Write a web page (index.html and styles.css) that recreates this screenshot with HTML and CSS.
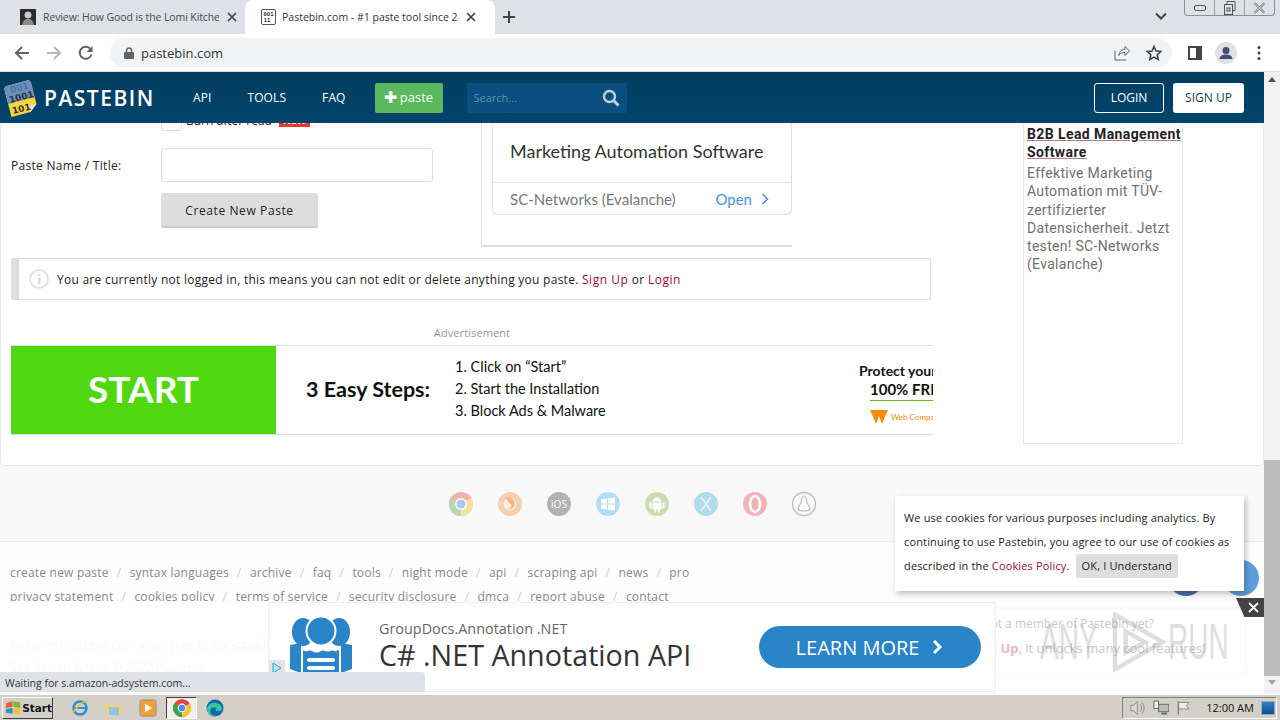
FILE: index.html
```html
<!DOCTYPE html>
<html lang="en">
<head>
    <meta charset="UTF-8">
    <title>Pastebin.com - #1 paste tool since 2002!</title>
    <link rel="stylesheet" href="styles.css">
</head>
<body>

    <!-- Browser tabs -->
    <div class="tabstrip">
        <div class="tab">
            <svg class="favicon" width="16" height="16" viewBox="0 0 16 16"><rect width="16" height="16" fill="#2b2b2b"/><circle cx="8" cy="6" r="3.5" fill="#c9c9c9"/><path d="M2 16c1-5 3-6 6-6s5 1 6 6z" fill="#8a8a8a"/></svg>
            <span class="tab-title">Review: How Good is the Lomi Kitche</span>
            <svg class="tab-close" width="10" height="10" viewBox="0 0 10 10"><path d="M1 1l8 8M9 1l-8 8" stroke="#3c4043" stroke-width="1.700"/></svg>
        </div>
        <div class="tab active">
            <svg class="favicon" width="15" height="16" viewBox="0 0 15 16"><rect x=".5" y=".5" width="14" height="15" rx="1.500" fill="#fff" stroke="#555"/><text x="7.500" y="7" class="favicon-text">001</text><text x="6" y="13" class="favicon-text">11</text></svg>
            <span class="tab-title">Pastebin.com - #1 paste tool since 2</span>
            <svg class="tab-close" width="10" height="10" viewBox="0 0 10 10"><path d="M1 1l8 8M9 1l-8 8" stroke="#3c4043" stroke-width="1.700"/></svg>
        </div>
        <svg class="new-tab" width="14" height="14" viewBox="0 0 14 14"><path d="M7 1v12M1 7h12" stroke="#444" stroke-width="2"/></svg>
        <svg class="tab-list" width="12" height="8" viewBox="0 0 12 8"><path d="M1 1.500l5 5 5-5" fill="none" stroke="#444" stroke-width="2"/></svg>
        <div class="window-controls">
            <span class="win-btn"><svg width="12" height="6" viewBox="0 0 12 6"><rect x=".5" y=".5" width="11" height="5" rx="1.500" fill="none" stroke="#555"/></svg></span>
            <span class="win-btn"><svg width="14" height="14" viewBox="0 0 14 14"><path d="M4 3V.5h8v9H10" fill="none" stroke="#555"/><rect x="1.500" y="3.500" width="8" height="10" fill="none" stroke="#555"/><rect x="4" y="7" width="3" height="3" fill="none" stroke="#555"/></svg></span>
            <span class="win-btn"><svg width="13" height="12" viewBox="0 0 13 12"><path d="M1.500 1l10 10M11.500 1l-10 10" stroke="#777" stroke-width="2.400"/><path d="M1.500 1l10 10M11.500 1l-10 10" stroke="#fff" stroke-width=".8"/></svg></span>
        </div>
    </div>

    <!-- Address bar -->
    <div class="toolbar">
        <svg class="tool-icon" width="16" height="16" viewBox="0 0 16 16"><path d="M15 8H2M8 2L2 8l6 6" fill="none" stroke="#5f6368" stroke-width="2"/></svg>
        <svg class="tool-icon" width="16" height="16" viewBox="0 0 16 16"><path d="M1 8h13M8 2l6 6-6 6" fill="none" stroke="#b4b7bb" stroke-width="2"/></svg>
        <svg class="tool-icon" width="16" height="16" viewBox="0 0 16 16"><path d="M13.500 9.500A6 6 0 1 1 12 3.600" fill="none" stroke="#5f6368" stroke-width="2"/><path d="M14.500 1v6h-6z" fill="#5f6368"/></svg>
        <div class="omnibox">
            <svg width="10" height="12" viewBox="0 0 10 12"><rect y="5" width="10" height="7" rx="1" fill="#5f6368"/><path d="M2.500 5.500V3.500a2.500 2.500 0 0 1 5 0v2" fill="none" stroke="#5f6368" stroke-width="1.500"/></svg>
            <span class="url">pastebin.com</span>
            <svg class="omni-share" width="16" height="16" viewBox="0 0 16 16"><path d="M11 1.500v2.800C6.500 4.500 5 7.500 4.800 10.500c1.500-2.500 3.500-3 6.200-3v3L15.500 6z M1 5.500v9.500h11" fill="none" stroke="#5f6368"/></svg>
            <svg class="omni-star" width="16" height="16" viewBox="0 0 16 16"><path d="M8 1.500l2 4.500 4.800.5-3.600 3.200 1 4.800L8 12.100 3.800 14.500l1-4.800L1.200 6.500 6 6z" fill="none" stroke="#444" stroke-width="1.600"/></svg>
        </div>
        <svg class="side-icon" width="14" height="14" viewBox="0 0 14 14"><rect x="1" y="1" width="12" height="12" fill="none" stroke="#444" stroke-width="2"/><rect x="8" y="1" width="5" height="12" fill="#444"/></svg>
        <svg class="avatar" width="22" height="22" viewBox="0 0 22 22"><circle cx="11" cy="11" r="11" fill="#dfe1e5"/><circle cx="11" cy="8.500" r="3.500" fill="#45506e"/><path d="M4.500 17c.5-3.500 3-4.500 6.500-4.500s6 1 6.500 4.500z" fill="#45506e"/></svg>
        <svg class="menu-icon" width="4" height="16" viewBox="0 0 4 16"><circle cx="2" cy="2.500" r="1.500" fill="#444"/><circle cx="2" cy="8" r="1.500" fill="#444"/><circle cx="2" cy="13.500" r="1.500" fill="#444"/></svg>
    </div>

    <!-- Viewport -->
    <div class="viewport">
        <div class="page">

            <div class="site-header">
                <svg class="logo" width="38" height="42" viewBox="0 0 38 42">
                    <path d="M2.500 13c-.5-2 .5-3.500 2.500-4L25 3.500c2-.5 3.500.5 4 2.500l5.500 21-6 8-19 5z" fill="#f3d63c"/>
                    <path d="M2.500 13c-.5-2 .5-3.500 2.500-4L25 3.500c2-.5 3.500.5 4 2.500l3.500 14L6.500 27z" fill="#6a8fc0"/>
                    <path d="M34.500 27l-6 8c-1-3-1-5-1-6.500z" fill="#dfe3e6"/>
                    <text x="9" y="16" class="logo-text logo-text-top" transform="rotate(-14 9 16)">001</text>
                    <text x="8" y="26" class="logo-text" transform="rotate(-14 8 26)">1001</text>
                    <text x="11" y="37" class="logo-text" transform="rotate(-14 11 37)">101</text>
                </svg>
                <span class="brand">PASTEBIN</span>
                <nav class="site-nav">
                    <a>API</a>
                    <a>TOOLS</a>
                    <a>FAQ</a>
                </nav>
                <div class="paste-btn"><span class="paste-plus">&#10010;</span> paste</div>
                <div class="search-box">
                    <span>Search...</span>
                    <svg width="18" height="18" viewBox="0 0 18 18"><circle cx="7.500" cy="7.500" r="5.500" fill="none" stroke="#b9d3e4" stroke-width="2.400"/><path d="M11.500 11.500L16.500 16.500" stroke="#b9d3e4" stroke-width="3"/></svg>
                </div>
                <div class="header-right">
                    <a class="login-btn">LOGIN</a>
                    <a class="signup-btn">SIGN UP</a>
                </div>
            </div>

            <div class="scroll-area">
                <div class="card">
                    <div class="main-col">
                        <div class="top-row">
                            <div class="form-col">
                                <div class="check-row">
                                    <span class="checkbox"></span>
                                    <span class="check-label">Burn after read</span>
                                    <span class="new-badge">NEW</span>
                                </div>
                                <div class="name-row">
                                    <label class="name-label">Paste Name / Title:</label>
                                    <input class="name-input" type="text">
                                </div>
                                <button class="create-btn">Create New Paste</button>
                            </div>
                            <div class="text-ad">
                                <div class="text-ad-inner">
                                    <div class="text-ad-title">Marketing Automation Software</div>
                                    <div class="text-ad-foot">
                                        <span>SC-Networks (Evalanche)</span>
                                        <span class="text-ad-open">Open
                                            <svg width="8" height="12" viewBox="0 0 8 12"><path d="M1.500 1l5 5-5 5" fill="none" stroke="#4a90d9" stroke-width="1.500"/></svg>
                                        </span>
                                    </div>
                                </div>
                            </div>
                        </div>

                        <div class="notice">
                            <svg width="20" height="20" viewBox="0 0 20 20"><circle cx="10" cy="10" r="9" fill="none" stroke="#ddd" stroke-width="1.600"/><rect x="9" y="8.500" width="2.400" height="6.500" fill="#ddd"/><rect x="9" y="4.800" width="2.400" height="2.400" fill="#ddd"/></svg>
                            <span>You are currently not logged in, this means you can not edit or delete anything you paste. <a class="red-link">Sign Up</a> or <a class="red-link">Login</a></span>
                        </div>

                        <div class="ad-label">Advertisement</div>
                        <div class="banner">
                            <div class="banner-start"><span>START</span></div>
                            <div class="banner-head">3 Easy Steps:</div>
                            <div class="banner-steps">
                                <div>1. Click on &ldquo;Start&rdquo;</div>
                                <div>2. Start the Installation</div>
                                <div>3. Block Ads &amp; Malware</div>
                            </div>
                            <div class="banner-protect">
                                <div class="banner-you">Protect your</div>
                                <div class="banner-free">100% FREE</div>
                                <div class="banner-web">
                                    <svg width="18" height="14" viewBox="0 0 18 14"><path d="M0 0h18l-4 9-2 5-3-8-3 8-2-5z" fill="#f98a0c"/></svg>
                                    <span>Web Companion</span>
                                </div>
                            </div>
                        </div>
                    </div>

                    <div class="side-ad">
                        <div class="side-ad-title"><span>B2B Lead Management Software</span></div>
                        <div class="side-ad-text">Effektive Marketing Automation mit TÜV-zertifizierter Datensicherheit. Jetzt testen! SC-Networks (Evalanche)</div>
                    </div>
                </div>

                <div class="platforms">
                    <svg width="26" height="26" viewBox="0 0 26 26"><circle cx="13" cy="13" r="12" fill="#f0a8a0"/><path d="M13 13L23.400 7A12 12 0 0 1 13 25z" fill="#f5dd94"/><path d="M13 13L13 25A12 12 0 0 1 2.600 7z" fill="#a9d3a5"/><circle cx="13" cy="13" r="6" fill="#fff"/><circle cx="13" cy="13" r="4.500" fill="#9cc0ec"/></svg>
                    <svg width="26" height="26" viewBox="0 0 26 26"><circle cx="13" cy="13" r="12" fill="#f6c7a4"/><circle cx="13" cy="13" r="6.500" fill="#fbeee0"/><path d="M9 7c6-2 10 3 8 8-1 3-5 4-7 3 4 0 5-3 4-5-1-1-3-1-3-3z" fill="#f3a76c"/></svg>
                    <svg width="26" height="26" viewBox="0 0 26 26"><circle cx="13" cy="13" r="12" fill="#a6a6a6"/><text x="13" y="17" class="ios-text">iOS</text></svg>
                    <svg width="26" height="26" viewBox="0 0 26 26"><circle cx="13" cy="13" r="12" fill="#a8d8f0"/><path d="M6 8.500l6-.9v5H6zM13 7.400l7-1.100v6.300h-7zM6 13.500h6v5l-6-.9zM13 13.500h7v6.300l-7-1.100z" fill="#fff"/></svg>
                    <svg width="26" height="26" viewBox="0 0 26 26"><circle cx="13" cy="13" r="12" fill="#c5d8a4"/><path d="M8.500 10.500a4.500 4 0 0 1 9 0zM8.500 11.500h9v7h-2v3h-1.500v-3h-2v3H10.500v-3h-2zM5.500 11.500h2v6h-2zM18.500 11.500h2v6h-2z" fill="#fff"/></svg>
                    <svg width="26" height="26" viewBox="0 0 26 26"><circle cx="13" cy="13" r="12" fill="#a8d4ec"/><path d="M8 6l10 14M18 6L8 20" stroke="#e4f2fa" stroke-width="1.600"/></svg>
                    <svg width="26" height="26" viewBox="0 0 26 26"><circle cx="13" cy="13" r="12" fill="#f2a7ab"/><ellipse cx="13" cy="13" rx="5" ry="8" fill="none" stroke="#fff" stroke-width="2.600"/></svg>
                    <svg width="26" height="26" viewBox="0 0 26 26"><circle cx="13" cy="13" r="11.500" fill="#fafafa" stroke="#b5b5b5" stroke-width="1.400"/><path d="M13 5c-2.500 0-2.500 3-2.500 5S7 15 7 18c0 2 3 2 6 2s6 0 6-2c0-3-3.500-6-3.500-8S15.500 5 13 5z" fill="none" stroke="#b5b5b5" stroke-width="1.200"/></svg>
                </div>

                <div class="footer">
                    <div class="footer-links">
                        <a>create new paste</a><i>/</i><a>syntax languages</a><i>/</i><a>archive</a><i>/</i><a>faq</a><i>/</i><a>tools</a><i>/</i><a>night mode</a><i>/</i><a>api</a><i>/</i><a>scraping api</a><i>/</i><a>news</a><i>/</i><a>pro</a>
                    </div>
                    <div class="footer-links">
                        <a>privacy statement</a><i>/</i><a>cookies policy</a><i>/</i><a>terms of service</a><i>/</i><a>security disclosure</a><i>/</i><a>dmca</a><i>/</i><a>report abuse</a><i>/</i><a>contact</a>
                    </div>
                    <p class="footer-note">By using Pastebin.com you agree to our <b>cookies policy</b> to enhance your experience.</p>
                    <p class="footer-note">Site design &amp; logo &copy; 2022 Pastebin</p>
                </div>
            </div>

            <!-- Overlays on the page -->
            <span class="social social-fb"></span>
            <span class="social social-tw"></span>

            <div class="fade"></div>

            <div class="member-box">
                <div class="member-line">Not a member of Pastebin yet?</div>
                <div class="member-sign"><b class="red-link">Sign Up</b>, it unlocks many cool features!</div>
            </div>

            <div class="watermark">
                <span>ANY</span>
                <svg width="60" height="60" viewBox="0 0 64 68"><path d="M6 3l54 31-54 31z M18 22l22 12-22 12z" fill="none" stroke="#9a9a9a" stroke-width="5"/></svg>
                <span>RUN</span>
            </div>

            <div class="cookie-box">
                We use cookies for various purposes including analytics. By continuing to use Pastebin, you agree to our use of cookies as described in the <a class="red-link">Cookies Policy</a>. <span class="cookie-ok">OK, I Understand</span>
            </div>

            <div class="bottom-ad">
                <svg class="ad-logo" width="62" height="72" viewBox="0 0 62 72">
                    <ellipse cx="13" cy="17" rx="11" ry="14" fill="#2a84c8"/>
                    <ellipse cx="49" cy="17" rx="11" ry="14" fill="#2a84c8"/>
                    <circle cx="31" cy="16" r="15.500" fill="#fff"/>
                    <circle cx="31" cy="16" r="13.500" fill="#2a84c8"/>
                    <path d="M0 30l11-2v30L0 54zM62 30l-11-2v30l11-4z" fill="#2a84c8"/>
                    <path d="M13 35c3 3 6-1 9 1s6 2 9 0 6 2 9 0 6 2 9-1v37H13z" fill="#2a84c8"/>
                    <rect x="17" y="43" width="28" height="4" rx="2" fill="#fff"/>
                    <rect x="17" y="51" width="28" height="4" rx="2" fill="#fff"/>
                </svg>
                <div class="ad-copy">
                    <div class="ad-small">GroupDocs.Annotation .NET</div>
                    <div class="ad-big">C# .NET Annotation API</div>
                </div>
                <div class="ad-cta">LEARN MORE
                    <svg width="12" height="16" viewBox="0 0 12 16"><path d="M2 2l6 6-6 6" fill="none" stroke="#fff" stroke-width="3"/></svg>
                </div>
                <span class="ad-choices"><svg width="10" height="12" viewBox="0 0 10 12"><path d="M1 1l8 5-8 5z" fill="#bfe6f5" stroke="#27a5d6"/></svg></span>
            </div>

            <div class="ad-close"><svg width="11" height="11" viewBox="0 0 11 11"><path d="M1 1l9 9M10 1l-9 9" stroke="#fff" stroke-width="1.800"/></svg></div>

            <div class="status-bubble">Waiting for s.amazon-adsystem.com...</div>
        </div>

        <div class="scrollbar">
            <span class="arrow-up"></span>
            <span class="thumb"></span>
            <span class="arrow-down"></span>
        </div>
    </div>

    <!-- Windows taskbar -->
    <div class="taskbar">
        <div class="start-btn">
            <svg width="17" height="15" viewBox="0 0 17 15"><path d="M1 3l7-2v6l-7 1z" fill="#e8622a"/><path d="M9 1l7 1v6l-7-1z" fill="#7cb83a"/><path d="M1 9l7-1v6l-7-1z" fill="#3a8ad8"/><path d="M9 8l7 1v6l-7-1z" fill="#f2c230"/></svg>
            <span>Start</span>
        </div>
        <div class="quick-launch">
            <svg width="18" height="18" viewBox="0 0 18 18"><ellipse cx="9" cy="9" rx="6.500" ry="6.500" fill="none" stroke="#2f8fd8" stroke-width="2.600"/><path d="M3 9h12" stroke="#2f8fd8" stroke-width="2"/><path d="M2 14C5 8 11 3 16 2" fill="none" stroke="#f2c230" stroke-width="1.400"/></svg>
            <svg width="18" height="16" viewBox="0 0 18 16"><path d="M1 3h6l2 2h8v10H1z" fill="#f0d27a"/><rect x="4" y="7" width="10" height="8" fill="#8ec5e8"/></svg>
            <svg width="18" height="18" viewBox="0 0 18 18"><rect x="1" y="1" width="16" height="16" rx="1.500" fill="#f3a02c" stroke="#7a8fa8"/><path d="M6 4.500l7 4.500-7 4.500z" fill="#fff"/></svg>
            <span class="chrome-task">
                <svg width="18" height="18" viewBox="0 0 18 18"><circle cx="9" cy="9" r="9" fill="#e0483e"/><path d="M9 9l7.800-4.500A9 9 0 0 1 9 18z" fill="#f6c42e"/><path d="M9 9v9A9 9 0 0 1 1.200 4.500z" fill="#3aa655"/><circle cx="9" cy="9" r="4.400" fill="#fff"/><circle cx="9" cy="9" r="3.300" fill="#4a8bf0"/></svg>
            </span>
            <svg width="18" height="18" viewBox="0 0 18 18"><circle cx="9" cy="9" r="8.500" fill="#1668a8"/><path d="M1 10c1-5 5-7 9-6 4 .5 6 3 6 6 0 2-3 2.500-5 2-2-.5-1-3 0-3-3-2-7 0-7 3 0 3 4 6 8 4-4 3.500-10 1.500-11-6z" fill="#35c6a8"/></svg>
        </div>
        <div class="tray">
            <svg width="18" height="16" viewBox="0 0 18 16"><path d="M2 5h3l4-4v14l-4-4H2z" fill="#d8d8d8" stroke="#888"/><path d="M12 4c2 2 2 6 0 8M14 2c3 3 3 9 0 12" fill="none" stroke="#888"/></svg>
            <svg width="18" height="16" viewBox="0 0 18 16"><rect x="6" y="4" width="11" height="8" fill="#bbb" stroke="#666"/><rect x="1" y="0.500" width="5" height="8" fill="#eee" stroke="#666"/><path d="M9 14h6" stroke="#666" stroke-width="2"/></svg>
            <svg width="16" height="16" viewBox="0 0 16 16"><path d="M2.500 1v14" stroke="#777" stroke-width="1.400"/><path d="M3 2h11l-3 3.500L14 9H3z" fill="#eee" stroke="#888"/></svg>
            <span class="clock">12:00 AM</span>
            <span class="show-desktop"></span>
        </div>
    </div>

</body>
</html>
```

FILE: styles.css
```css
* {
    box-sizing: border-box;
}

html, body {
    margin: 0;
    height: 720px;
    overflow: hidden;
}

body {
    font-family: "Open Sans", sans-serif;
    display: flex;
    flex-direction: column;
    background: #fff;
}

a {
    text-decoration: none;
}

/* Browser tabs */
.tabstrip {
    height: 34px;
    background: #dee1e6;
    display: flex;
    align-items: flex-end;
    padding-left: 8px;
    position: relative;
    flex: none;
}

.tab {
    width: 237px;
    height: 34px;
    display: flex;
    align-items: center;
    padding-left: 12px;
    font-size: 10.500px;
    letter-spacing: -.1px;
    color: #45494e;
}

.tab.active {
    width: 250px;
    background: #fff;
    border-radius: 8px 8px 0 0;
    padding-left: 16px;
    letter-spacing: 0;
    color: #333;
}

.favicon {
    flex: none;
    margin-right: 7px;
}

.tab.active .favicon {
    margin-right: 6px;
}

.favicon-text {
    font-family: "DejaVu Sans Mono", monospace;
    font-size: 5.500px;
    font-weight: bold;
    text-anchor: middle;
    fill: #333;
}

.tab-title {
    width: 176px;
    white-space: nowrap;
    overflow: hidden;
}

.tab-close {
    margin-left: 8px;
    flex: none;
}

.new-tab {
    margin: 0 0 10px 7px;
}

.tab-list {
    margin: 0 0 14px 639px;
}

.window-controls {
    position: absolute;
    top: 0;
    right: 5px;
    width: 91px;
    height: 16px;
    display: flex;
    border: 1px solid #8a8d92;
    border-top: none;
    border-radius: 0 0 4px 4px;
}

.win-btn {
    flex: 1;
    display: flex;
    align-items: center;
    justify-content: center;
    border-left: 1px solid #9a9da2;
}

.win-btn:first-child {
    border-left: none;
}

/* Address bar */
.toolbar {
    height: 38px;
    background: #fff;
    display: flex;
    align-items: center;
    padding-left: 14px;
    flex: none;
    border-bottom: 1px solid #dadce0;
}

.tool-icon {
    margin-right: 16px;
}

.omnibox {
    width: 1062px;
    height: 29px;
    background: #f1f3f4;
    border-radius: 15px;
    display: flex;
    align-items: center;
    padding-left: 14px;
}

.url {
    margin-left: 7px;
    font-size: 13px;
    color: #333;
    flex: 1;
}

.omni-share {
    margin-right: 16px;
}

.omni-star {
    margin-right: 10px;
}

.side-icon {
    margin-left: 16px;
}

.avatar {
    margin-left: 13px;
}

.menu-icon {
    margin-left: 20px;
}

/* Viewport */
.viewport {
    height: 622px;
    display: flex;
    flex: none;
}

.page {
    width: 1264px;
    position: relative;
    overflow: hidden;
    background: #f8f8f8;
    display: flex;
    flex-direction: column;
}

.scrollbar {
    width: 16px;
    background: #f1f1f1;
    display: flex;
    flex-direction: column;
    align-items: center;
    padding-top: 5px;
}

.arrow-up {
    border: 4px solid transparent;
    border-top: none;
    border-bottom: 5px solid #505050;
}

.thumb {
    width: 16px;
    height: 216px;
    margin-top: 378px;
    background: #bcbcbc;
}

.arrow-down {
    margin-top: 4px;
    border: 4px solid transparent;
    border-bottom: none;
    border-top: 5px solid #a3a3a3;
}

/* Site header */
.site-header {
    height: 51px;
    flex: none;
    position: relative;
    z-index: 2;
    background: linear-gradient(#023d5f, #03456d);
    display: flex;
    align-items: center;
    padding-left: 2px;
}

.logo {
    flex: none;
}

.logo-text {
    font-family: "DejaVu Sans", sans-serif;
    font-size: 9px;
    font-weight: bold;
    fill: #333;
}

.logo-text-top {
    fill: #4f76aa;
}

.brand {
    margin-left: 4px;
    width: 149px;
    font-family: "Open Sans", sans-serif;
    font-size: 21px;
    font-weight: 600;
    letter-spacing: 1.500px;
    color: #fff;
    white-space: nowrap;
}

.site-nav {
    display: flex;
    gap: 36px;
    font-size: 12px;
    letter-spacing: .1px;
    color: #fff;
}

.paste-btn {
    width: 68px;
    height: 30px;
    margin-left: 29px;
    background: #5cb85c;
    border-radius: 2px;
    color: #fff;
    font-size: 13px;
    padding-bottom: 2px;
    display: flex;
    align-items: center;
    justify-content: center;
    gap: 3px;
}

.paste-plus {
    font-size: 16px;
}

.search-box {
    width: 160px;
    height: 30px;
    margin-left: 24px;
    background: #0a4f7e;
    border-radius: 2px;
    display: flex;
    align-items: center;
    justify-content: space-between;
    padding: 0 7px;
    font-size: 11px;
    color: #5f8fae;
}

.header-right {
    margin-left: auto;
    margin-right: 20px;
    display: flex;
    gap: 9px;
}

.login-btn, .signup-btn {
    height: 30px;
    width: 71px;
    border-radius: 3px;
    font-size: 12px;
    display: flex;
    align-items: center;
    justify-content: center;
}

.login-btn {
    width: 70px;
    border: 1px solid #fff;
    color: #fff;
}

.signup-btn {
    background: #fff;
    color: #1c3a50;
}

/* Page card */
.scroll-area {
    height: 571px;
    overflow: hidden;
}

.card {
    height: 343px;
    background: #fff;
    border: 1px solid #e6e6e6;
    border-top: none;
    border-radius: 0 0 5px 5px;
    display: flex;
    padding-left: 10px;
}

.main-col {
    width: 922px;
    margin-top: -14px;
}

.top-row {
    display: flex;
    height: 138px;
}

.form-col {
    width: 470px;
}

.check-row {
    height: 22px;
    padding-left: 150px;
    display: flex;
    align-items: center;
    font-size: 12px;
    color: #222;
}

.checkbox {
    width: 21px;
    height: 22px;
    border: 1px solid #ddd;
    border-radius: 3px;
    background: #fff;
}

.check-label {
    margin-left: 4px;
}

.new-badge {
    margin-left: 7px;
    padding: 0 4px;
    background: #e8392c;
    color: #fff;
    font-size: 10px;
    font-weight: bold;
    line-height: 14px;
}

.name-row {
    display: flex;
    align-items: center;
    margin-top: 17px;
}

.name-label {
    width: 150px;
    font-size: 12px;
    letter-spacing: .3px;
    color: #222;
}

.name-input {
    width: 272px;
    height: 34px;
    border: 1px solid #ddd;
    border-radius: 3px;
    background: #fff;
}

.create-btn {
    display: block;
    width: 157px;
    height: 35px;
    margin: 11px 0 0 150px;
    padding: 2px 0 0;
    background: #ddd;
    border: none;
    border-bottom: 2px solid #c9c9c9;
    border-radius: 2px;
    font-family: "Open Sans", sans-serif;
    font-size: 12px;
    letter-spacing: .6px;
    color: #222;
}

.text-ad {
    width: 311px;
    height: 138px;
    border-left: 1px solid #e2e2e2;
    border-bottom: 2px solid #ddd;
    padding-left: 10px;
}

.text-ad-inner {
    height: 106px;
    border: 1px solid #ddd;
    border-top: none;
    border-radius: 0 0 6px 6px;
    display: flex;
    flex-direction: column;
    justify-content: flex-end;
}

.text-ad-title {
    padding: 0 0 19px 17px;
    font-family: Lato, sans-serif;
    font-size: 18px;
    line-height: 23px;
    color: #333;
    border-bottom: 1px solid #e2e2e2;
    white-space: nowrap;
}

.text-ad-foot {
    height: 31px;
    display: flex;
    align-items: center;
    justify-content: space-between;
    padding: 0 22px 0 17px;
    font-family: Lato, sans-serif;
    font-size: 15px;
    color: #777;
}

.text-ad-open {
    display: flex;
    align-items: center;
    gap: 9px;
    font-size: 15px;
    color: #4a90d9;
}

.notice {
    width: 920px;
    height: 42px;
    margin-top: 11px;
    border: 1px solid #ddd;
    border-left: 8px solid #ddd;
    border-radius: 2px;
    display: flex;
    align-items: center;
    gap: 8px;
    padding-left: 10px;
    font-size: 12px;
    letter-spacing: .26px;
    color: #222;
}

.red-link {
    color: #9a0a3c;
}

.notice .red-link {
    letter-spacing: .55px;
}

.ad-label {
    margin: 24px 0 0;
    height: 21px;
    padding-top: 1px;
    text-align: center;
    font-size: 11px;
    letter-spacing: .1px;
    color: #999;
}

.banner {
    width: 922px;
    height: 90px;
    display: flex;
    align-items: center;
    overflow: hidden;
    border-top: 1px solid #ddd;
    border-bottom: 1px solid #ddd;
    font-family: Lato, sans-serif;
    color: #111;
}

.banner-start {
    width: 265px;
    height: 88px;
    flex: none;
    padding-bottom: 3px;
    background: #4fd80f;
    color: #fff;
    font-size: 37px;
    font-weight: bold;
    display: flex;
    align-items: center;
    justify-content: center;
}

.banner-head {
    margin-left: 30px;
    width: 149px;
    flex: none;
    padding-bottom: 2px;
    font-size: 21.500px;
    font-weight: bold;
    white-space: nowrap;
}

.banner-steps {
    width: 404px;
    flex: none;
    padding-bottom: 2px;
    font-size: 14.500px;
    line-height: 22px;
}

.banner-protect {
    flex: none;
    padding-top: 4px;
    white-space: nowrap;
    font-size: 14px;
    font-weight: bold;
}

.banner-you {
    line-height: 19px;
}

.banner-free {
    margin-left: 11px;
    width: 70px;
    overflow: hidden;
    font-size: 15px;
    line-height: 19px;
    padding-bottom: 1px;
    border-bottom: 1px solid #6cb52a;
}

.banner-web {
    display: flex;
    align-items: center;
    gap: 3px;
    margin: 9px 0 0 11px;
    font-size: 8px;
    font-weight: normal;
    color: #f98a0c;
}

.side-ad {
    width: 160px;
    height: 321px;
    margin-left: 90px;
    padding: 2px 0 0 3px;
    border: 1px solid #e4e4e4;
    border-top: none;
    font-family: Roboto, sans-serif;
}

.side-ad-title {
    font-size: 14px;
    font-weight: bold;
    line-height: 18px;
    letter-spacing: .4px;
    color: #222;
}

.side-ad-title span {
    text-decoration: underline;
    text-decoration-color: #b07a90;
}

.side-ad-text {
    margin-top: 3px;
    font-size: 14px;
    line-height: 18.300px;
    letter-spacing: .3px;
    color: #707070;
}

/* Footer */
.platforms {
    height: 76px;
    border-bottom: 1px solid #eaeaea;
    display: flex;
    align-items: center;
    gap: 23px;
    padding-left: 448px;
}

.platforms svg {
    opacity: .85;
}

.ios-text {
    font-size: 10px;
    text-anchor: middle;
    fill: #fff;
}

.footer {
    height: 200px;
    background: #fdfdfd;
    padding: 18px 10px 0;
    font-size: 12px;
    color: #888;
}

.footer-links {
    height: 24px;
    display: flex;
    align-items: center;
    letter-spacing: .2px;
}

.footer-links i {
    width: 21px;
    text-align: center;
    font-style: normal;
    color: #ccc;
}

.footer-note {
    margin: 0;
    height: 23px;
    line-height: 23px;
    color: #999;
}

.footer-note:first-of-type {
    margin-top: 25px;
}

/* Overlays */
.social {
    position: absolute;
    top: 488px;
    width: 36px;
    height: 36px;
    border-radius: 50%;
}

.social-fb {
    left: 1168px;
    background: #4e6bb0;
}

.social-tw {
    left: 1223px;
    background: #5f9edc;
}

.fade {
    position: absolute;
    left: 0;
    top: 529px;
    width: 1264px;
    height: 93px;
    background: rgba(255, 255, 255, .92);
}

.member-box {
    position: absolute;
    left: 970px;
    top: 537px;
    width: 275px;
    height: 64px;
    font-size: 12px;
    line-height: 25px;
    padding: 2px 40px 0 0;
    text-align: right;
    white-space: nowrap;
    background: rgba(255, 255, 255, .85);
    box-shadow: 0 0 6px rgba(0, 0, 0, .06);
    color: #c8c8c8;
}

.member-line {
    margin-right: 51px;
}

.member-sign {
    font-size: 13px;
}

.member-box .red-link {
    color: #eab4c6;
}

.watermark {
    position: absolute;
    left: 1040px;
    top: 540px;
    height: 60px;
    display: flex;
    align-items: center;
    font-family: "Liberation Sans", sans-serif;
    font-size: 50px;
    color: #9a9a9a;
    opacity: .32;
}

.watermark svg {
    flex: none;
}

.watermark span {
    width: 68px;
    transform: scaleX(.56);
    transform-origin: left center;
}

.cookie-box {
    position: absolute;
    left: 895px;
    top: 424px;
    width: 349px;
    height: 95px;
    padding: 10px 9px;
    background: #fff;
    box-shadow: 2px 3px 6px rgba(0, 0, 0, .25);
    font-size: 11px;
    line-height: 24px;
    letter-spacing: .15px;
    color: #222;
}

.cookie-ok {
    display: inline-block;
    height: 24px;
    line-height: 24px;
    padding: 0 6px;
    margin-left: 3px;
    background: #ddd;
    border-radius: 2px;
}

.bottom-ad {
    position: absolute;
    left: 268px;
    top: 530px;
    width: 728px;
    height: 90px;
    background: #fff;
    border: 1px solid #eee;
    display: flex;
    align-items: center;
    padding-left: 21px;
}

.ad-logo {
    flex: none;
    align-self: flex-start;
    margin-top: 12px;
}

.ad-copy {
    margin-left: 27px;
    width: 380px;
    padding-bottom: 3px;
}

.ad-small {
    font-family: "Open Sans", sans-serif;
    font-size: 14.400px;
    color: #666;
}

.ad-big {
    font-family: "Open Sans", sans-serif;
    font-size: 28.700px;
    line-height: 34px;
    color: #333;
}

.ad-cta {
    width: 222px;
    height: 42px;
    background: #2a84c8;
    border-radius: 21px;
    color: #fff;
    font-size: 20px;
    display: flex;
    align-items: center;
    justify-content: center;
    gap: 13px;
}

.ad-choices {
    position: absolute;
    left: 0;
    top: 57px;
    width: 16px;
    height: 15px;
    background: #e4e4e4;
    display: flex;
    align-items: center;
    justify-content: center;
}

.ad-close {
    position: absolute;
    left: 1236px;
    top: 526px;
    width: 28px;
    height: 19px;
    background: #444;
    clip-path: polygon(0 0, 100% 0, 100% 100%, 30% 100%);
    display: flex;
    align-items: center;
    justify-content: flex-end;
    padding-right: 5px;
}

.status-bubble {
    position: absolute;
    left: 0;
    bottom: 2px;
    width: 425px;
    height: 20px;
    background: #dee1e6;
    border-radius: 0 4px 0 0;
    padding: 1px 0 0 5px;
    font-size: 10.500px;
    line-height: 20px;
    color: #333;
}

/* Windows taskbar */
.taskbar {
    height: 26px;
    flex: none;
    background: #d4d0c8;
    border-top: 1px solid #fff;
    display: flex;
    align-items: center;
    padding-left: 2px;
}

.start-btn {
    width: 51px;
    height: 22px;
    background: #d4d0c8;
    border: 1px solid;
    border-color: #fff #404040 #404040 #fff;
    display: flex;
    align-items: center;
    gap: 1px;
    padding-left: 2px;
    font-family: "DejaVu Sans", sans-serif;
    font-size: 10.500px;
    font-weight: bold;
    color: #111;
}

.quick-launch {
    margin-left: 18px;
    display: flex;
    align-items: center;
    gap: 16px;
}

.chrome-task {
    width: 31px;
    height: 22px;
    margin: 0 -7px;
    background: #f2f0ec;
    border: 1px solid;
    border-color: #404040 #fff #fff #404040;
    display: flex;
    align-items: center;
    justify-content: center;
}

.tray {
    margin-left: auto;
    margin-right: 3px;
    width: 155px;
    height: 22px;
    border: 1px solid;
    border-color: #808080 #fff #fff #808080;
    display: flex;
    align-items: center;
    padding-left: 6px;
    gap: 7px;
}

.clock {
    margin-left: 8px;
    font-size: 11px;
    color: #111;
    white-space: nowrap;
}

.show-desktop {
    width: 15px;
    height: 14px;
    margin-left: auto;
    margin-right: 1px;
    background: linear-gradient(#2d7fc8, #0e4f96);
    border: 1px solid #9ab;
}
```
